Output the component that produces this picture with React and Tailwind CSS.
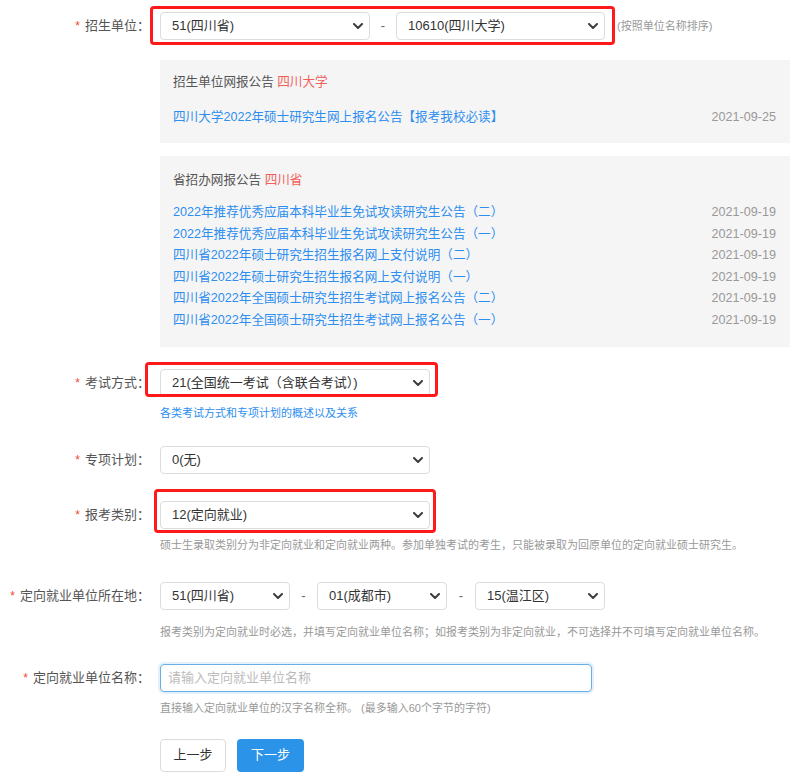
const FONT = { fontFamily: '"Liberation Sans", "Noto Sans CJK SC", sans-serif' };

function Chevron() {
  return (
    <svg width="10" height="6" viewBox="0 0 10 6" className="shrink-0">
      <path d="M1 1 L5 5 L9 1" fill="none" stroke="#3d3d3d" strokeWidth="2" strokeLinecap="round" strokeLinejoin="round" />
    </svg>
  );
}

function Select({ value, className = "" }) {
  return (
    <div
      className={`h-[28px] flex items-center justify-between bg-white border border-[#dcdcdc] rounded-[4px] pl-[11px] pr-[6px] text-[13px] text-[#333] ${className}`}
    >
      <span className="whitespace-nowrap">{value}</span>
      <Chevron />
    </div>
  );
}

function Label({ text }) {
  return (
    <div className="w-[150px] shrink-0 h-[28px] flex items-center justify-end text-[13px] text-[#555] whitespace-nowrap">
      <span className="text-[#ee4b2b] mr-[5px] text-[12px]">*</span>
      {text}：
    </div>
  );
}

function RedMark({ className }) {
  return (
    <div
      className={`absolute border-[3px] border-[#ff1a1a] rounded-[4px] pointer-events-none ${className}`}
    />
  );
}

function Help({ children, className = "" }) {
  return (
    <div className={`leading-[16px] text-[11px] text-[#999] whitespace-nowrap ${className}`}>
      {children}
    </div>
  );
}

const provNotices = [
  "2022年推荐优秀应届本科毕业生免试攻读研究生公告（二）",
  "2022年推荐优秀应届本科毕业生免试攻读研究生公告（一）",
  "四川省2022年硕士研究生招生报名网上支付说明（二）",
  "四川省2022年硕士研究生招生报名网上支付说明（一）",
  "四川省2022年全国硕士研究生招生考试网上报名公告（二）",
  "四川省2022年全国硕士研究生招生考试网上报名公告（一）",
];

export default function App() {
  return (
    <div className="w-[801px] min-h-[778px] bg-white pt-[12px]" style={FONT}>
      {/* 招生单位 */}
      <div className="flex">
        <Label text="招生单位" />
        <div className="ml-[10px] relative flex items-center">
          <Select value="51(四川省)" className="w-[210px]" />
          <div className="w-[26px] text-center text-[13px] text-[#666]">-</div>
          <Select value="10610(四川大学)" className="w-[209px]" />
          <span className="ml-[12px] text-[11px] text-[#999] whitespace-nowrap">(按照单位名称排序)</span>
          <RedMark className="left-[-10px] top-[-6px] w-[465px] h-[39px]" />
        </div>
      </div>

      {/* 公告 */}
      <div className="ml-[160px] w-[630px] mt-[20px] bg-[#f5f5f5] pt-[12px] pb-[16px] pl-[13px] pr-[14px] text-[12.6px]">
        <div className="leading-[20px] text-[#555]">
          招生单位网报公告 <span className="text-[#f0605a]">四川大学</span>
        </div>
        <div className="mt-[15px] leading-[20px] flex justify-between">
          <span className="text-[#2d8ef0]">四川大学2022年硕士研究生网上报名公告【报考我校必读】</span>
          <span className="text-[#999]">2021-09-25</span>
        </div>
      </div>

      <div className="ml-[160px] w-[630px] mt-[13px] bg-[#f5f5f5] pt-[14px] pb-[15px] pl-[13px] pr-[14px] text-[12.6px]">
        <div className="leading-[20px] text-[#555]">
          省招办网报公告 <span className="text-[#f0605a]">四川省</span>
        </div>
        <div className="mt-[12px]">
          {provNotices.map((n) => (
            <div key={n} className="leading-[21.6px] flex justify-between">
              <span className="text-[#2d8ef0]">{n}</span>
              <span className="text-[#999]">2021-09-19</span>
            </div>
          ))}
        </div>
      </div>

      {/* 考试方式 */}
      <div className="flex mt-[22px]">
        <Label text="考试方式" />
        <div className="ml-[10px]">
          <div className="relative">
            <Select value="21(全国统一考试（含联合考试）)" className="w-[270px]" />
            <RedMark className="left-[-15px] top-[-7px] w-[293px] h-[35px]" />
          </div>
          <div className="mt-[8px] leading-[16px] text-[11px] text-[#2d8ef0]">各类考试方式和专项计划的概述以及关系</div>
        </div>
      </div>

      {/* 专项计划 */}
      <div className="flex mt-[25px]">
        <Label text="专项计划" />
        <div className="ml-[10px]">
          <Select value="0(无)" className="w-[270px]" />
        </div>
      </div>

      {/* 报考类别 */}
      <div className="flex mt-[27px]">
        <Label text="报考类别" />
        <div className="ml-[10px]">
          <div className="relative">
            <Select value="12(定向就业)" className="w-[270px]" />
            <RedMark className="left-[-6px] top-[-12px] w-[282px] h-[44px]" />
          </div>
          <Help className="mt-[8px]">
            硕士生录取类别分为非定向就业和定向就业两种。参加单独考试的考生，只能被录取为回原单位的定向就业硕士研究生。
          </Help>
        </div>
      </div>

      {/* 定向就业单位所在地 */}
      <div className="flex mt-[29px]">
        <Label text="定向就业单位所在地" />
        <div className="ml-[10px]">
          <div className="flex items-center">
            <Select value="51(四川省)" className="w-[130px]" />
            <div className="w-[27px] text-center text-[13px] text-[#666]">-</div>
            <Select value="01(成都市)" className="w-[130px]" />
            <div className="w-[28px] text-center text-[13px] text-[#666]">-</div>
            <Select value="15(温江区)" className="w-[130px]" />
          </div>
          <Help className="mt-[14px]">
            报考类别为定向就业时必选，并填写定向就业单位名称；如报考类别为非定向就业，不可选择并不可填写定向就业单位名称。
          </Help>
        </div>
      </div>

      {/* 定向就业单位名称 */}
      <div className="flex mt-[24px]">
        <Label text="定向就业单位名称" />
        <div className="ml-[10px]">
          <input
            placeholder="请输入定向就业单位名称"
            className="w-[432px] h-[28px] px-[7px] text-[13px] text-[#333] placeholder:text-[#bbb] border border-[#66afe9] rounded-[4px] outline-none shadow-[0_0_0_2px_rgba(102,175,233,0.18)]"
            style={FONT}
          />
          <Help className="mt-[8px]">直接输入定向就业单位的汉字名称全称。 (最多输入60个字节的字符)</Help>
        </div>
      </div>

      {/* 按钮 */}
      <div className="flex mt-[23px] ml-[160px] gap-[11px]">
        <button className="w-[66px] h-[33px] border border-[#dcdcdc] rounded-[4px] bg-white text-[13px] text-[#333]" style={FONT}>
          上一步
        </button>
        <button className="w-[67px] h-[33px] rounded-[4px] bg-[#2b94e8] text-[13px] text-white" style={FONT}>
          下一步
        </button>
      </div>
    </div>
  );
}
